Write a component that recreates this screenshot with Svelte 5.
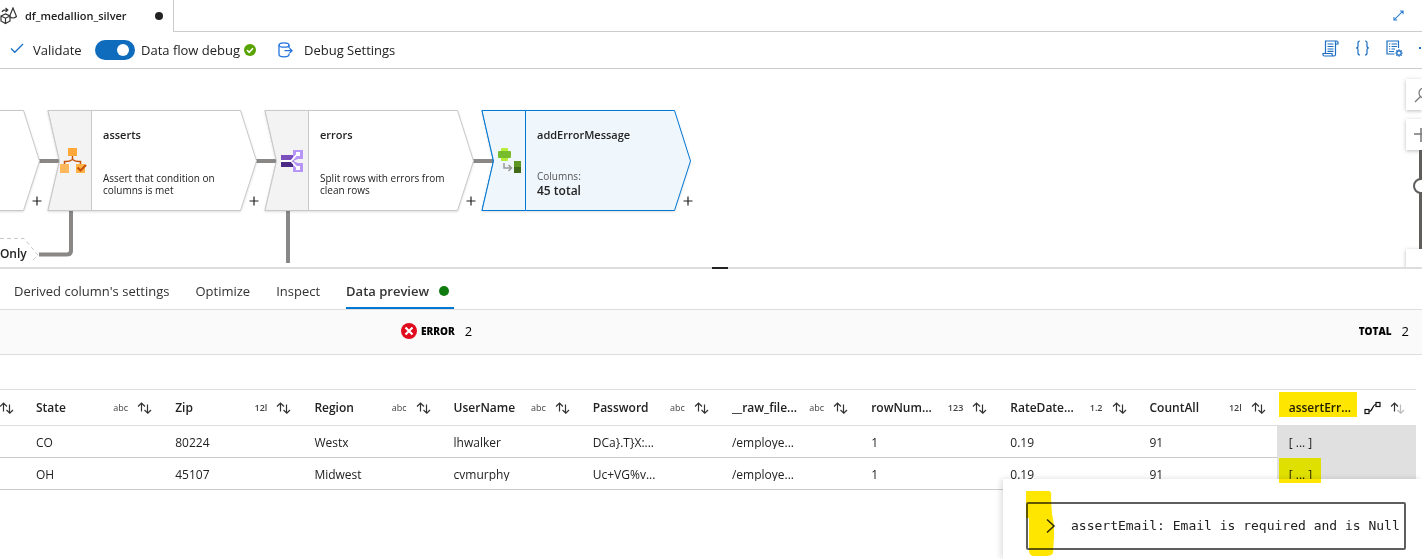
<script>
  const nodes = [
    { id: 'source', x: -169, title: '', text: '' },
    { id: 'asserts', x: 48, title: 'asserts', text: 'Assert that condition on columns is met' },
    { id: 'errors', x: 265, title: 'errors', text: 'Split rows with errors from clean rows' },
    { id: 'addErrorMessage', x: 482, title: 'addErrorMessage', total: '45 total', selected: true }
  ];

  const tabs = ["Derived column's settings", 'Optimize', 'Inspect', 'Data preview'];
  const active = 'Data preview';

  const columns = [
    { name: 'State', type: 'abc' },
    { name: 'Zip', type: '12l' },
    { name: 'Region', type: 'abc' },
    { name: 'UserName', type: 'abc' },
    { name: 'Password', type: 'abc' },
    { name: '__raw_file...', type: 'abc' },
    { name: 'rowNum...', type: '123' },
    { name: 'RateDate...', type: '1.2' },
    { name: 'CountAll', type: '12l' },
    { name: 'assertErr...', type: 'complex' }
  ];

  const rows = [
    ['CO', '80224', 'Westx', 'lhwalker', 'DCa}.T}X:...', '/employe...', '1', '0.19', '91', '[ ... ]'],
    ['OH', '45107', 'Midwest', 'cvmurphy', 'Uc+VG%v...', '/employe...', '1', '0.19', '91', '[ ... ]']
  ];
</script>

{#snippet sortIcon(half)}
  <svg width="15" height="12" viewBox="0 0 15 12" fill="none" stroke="#333" stroke-width="1.2">
    <path d="M4.5 9.5V1M1 4.5L4.5 1L8 4.5" />
    <path d="M10.5 2.500V11.2M7.5 8L10.8 11.2L14 8" stroke={half ? '#bbb' : '#333'} />
  </svg>
{/snippet}

<div class="page">
  <header class="filebar">
    <div class="filetab">
      <svg class="flowicon" width="17" height="18" viewBox="0 0 17 18" fill="none" stroke="#333" stroke-width="1.2">
        <path d="M1 9L5.5 7L10 9V14L5.5 16.5L1 14ZM1 9L5.5 11.2L10 9M5.5 11.2V16.500M13 1L9.500 9.500Q13 12.500 16.500 9.500ZM2 5Q3 2.500 7.500 3M5.500 1L7.800 3L5.500 5" />
      </svg>
      <span>df_medallion_silver</span>
      <i class="dirty"></i>
    </div>
    <div class="filerest">
      <button class="plain" aria-label="Expand">
        <svg width="11" height="11" viewBox="0 0 12 12" fill="none" stroke="#2b7cd3" stroke-width="1.1">
          <path d="M1 11L11 1M7.500 1H11V4.500M1 7.500V11H4.500" />
        </svg>
      </button>
      <span class="edge"></span>
    </div>
  </header>

  <div class="toolbar">
    <button class="plain validate">
      <svg width="14" height="11" viewBox="0 0 14 11" fill="none" stroke="#1b6ec2" stroke-width="1.3"><path d="M1 5.500L4.800 9.300L13 1" /></svg>
      Validate
    </button>
    <label class="debug">
      <input type="checkbox" role="switch" checked />
      Data flow debug
      <svg width="12" height="12" viewBox="0 0 12 12"><circle cx="6" cy="6" r="6" fill="#57a300" /><path d="M3 6.200L5.200 8.300L9 4.300" fill="none" stroke="#fff" stroke-width="1.6" /></svg>
    </label>
    <button class="plain settings">
      <svg width="15" height="16" viewBox="0 0 15 16" fill="none" stroke="#2374dd" stroke-width="1.3">
        <ellipse cx="6" cy="3" rx="5" ry="2.200" />
        <path d="M1 3V12.500Q1 14.800 6 14.800Q11 14.800 11 12.500V11.500M11 3V6M6.500 8.700H14M11.500 6.300L14 8.700L11.500 11" />
      </svg>
      Debug Settings
    </button>
    <div class="tools">
      <button class="plain" aria-label="Script">
        <svg width="17" height="17" viewBox="0 0 17 17" fill="none" stroke="#1b6ec2" stroke-width="1.200">
          <path d="M3.500 13V1H14.500Q16 1 16 2.500V4H13.500M14.500 1Q13.500 1 13.500 3V14.500Q13.500 16 12 16H2.500Q1 16 1 14.500V13.500H10V14.500Q10 16 12 16M5.500 4H11.500M5.500 6.500H11.500M5.500 9H11.500M5.500 11.300H11.500" />
        </svg>
      </button>
      <button class="plain" aria-label="Code">
        <svg width="15" height="16" viewBox="0 0 15 16" fill="none" stroke="#1b6ec2" stroke-width="1.200">
          <path d="M5 1Q3 1 3 3V6Q3 8 1 8Q3 8 3 10V13Q3 15 5 15M10 1Q12 1 12 3V6Q12 8 14 8Q12 8 12 10V13Q12 15 10 15" />
        </svg>
      </button>
      <button class="plain" aria-label="Properties">
        <svg width="17" height="17" viewBox="0 0 17 17" fill="none" stroke="#1b6ec2" stroke-width="1.200">
          <path d="M8.500 14H1V1H12.500V8M3 4H4.200M3 6.500H4.200M3 9H4.200M5.500 4H11M5.500 6.500H11M5.500 9H9M3 11.500H8" />
          <circle cx="13" cy="13" r="2.200" />
          <path d="M13 9.300V10.800M13 15.200V16.700M9.300 13H10.800M15.200 13H16.700M10.400 10.400L11.500 11.500M14.500 14.500L15.600 15.600M15.600 10.400L14.500 11.500M11.500 14.500L10.400 15.600" />
        </svg>
      </button>
      <i class="more"></i>
    </div>
  </div>

  <main class="canvas">
    <svg class="links" width="700" height="194" fill="none" stroke="#8a8886" stroke-width="4">
      <path d="M39 92H60M256 92H277M473 92H494" />
      <path d="M39 185.500H67Q71 185.500 71 181.500V142M288 142V194" />
      <path d="M0 169.500H24L38 186L31 193" stroke="#c8c8c8" stroke-width="1" stroke-dasharray="4 3" />
    </svg>
    <span class="stub">eOnly</span>

    {#each nodes as node (node.id)}
      <article class="node" class:selected={node.selected} style="left: {node.x}px">
        <svg class="shape" width="210" height="102" viewBox="0 0 210 102">
          <path class="body" d="M0 .5H192.500L208.500 51L192.500 100.500H0L11.500 51Z" />
          <path class="side" d="M0 .5H43.500V100.500H0L11.500 51Z" />
        </svg>
        <div class="glyph">
          {#if node.id === 'asserts'}
            <svg width="28" height="26" viewBox="0 0 28 26">
              <rect x="9" y="0" width="9" height="8" fill="#ffa93a" /><rect x="1" y="16" width="9" height="9" fill="#ffb75e" /><rect x="17" y="16" width="9" height="9" fill="#ffb347" />
              <path d="M13.500 8V12M5.500 16V13.500Q10 14 13.500 11.500Q17 14 21.500 13.500V16" fill="none" stroke="#c5540a" stroke-width="1.500" />
              <path d="M18.500 19.500L21.500 22.500L27 17" fill="none" stroke="#c5540a" stroke-width="2.200" />
            </svg>
          {:else if node.id === 'errors'}
            <svg width="24" height="22" viewBox="0 0 24 22">
              <rect x="1" y="5" width="13" height="6" fill="#7a50bd" /><rect x="1" y="11" width="13" height="6" fill="#4b2a86" />
              <path d="M13 0H23V9H18L13 11ZM13 22H23V13H18L13 11Z" fill="#b796f9" />
              <path d="M1 11H11L17 4.500M11 11L17 17.500" fill="none" stroke="#fff" stroke-width="1.800" />
              <rect x="16" y="2" width="4" height="4" fill="#fff" /><rect x="16" y="16" width="4" height="4" fill="#fff" />
            </svg>
          {:else if node.selected}
            <svg width="24" height="26" viewBox="0 0 24 26">
              <rect x="4" y="0" width="7" height="13" rx="1" fill="#b4ec36" /><rect x="1" y="3" width="13" height="7" rx="1" fill="#76bc2d" />
              <path d="M7 15V20H14M11.500 17L14.500 20L11.500 23" fill="none" stroke="#999" stroke-width="1.500" />
              <rect x="17" y="13" width="7" height="6" fill="#5e9624" /><rect x="17" y="19" width="7" height="6" fill="#426b19" />
            </svg>
          {/if}
        </div>
        <div class="info">
          <h3>{node.title}</h3>
          {#if node.total}
            <p class="count">Columns:<b>{node.total}</b></p>
          {:else}
            <p>{node.text}</p>
          {/if}
        </div>
        <button class="plain add" aria-label="Add step">
          <svg width="10" height="10" viewBox="0 0 10 10" stroke="#222" stroke-width="1.200"><path d="M5 .5V9.500M.5 5H9.500" /></svg>
        </button>
      </article>
    {/each}

    <div class="zoom">
      <button class="tool" aria-label="Search">
        <svg width="16" height="16" viewBox="0 0 16 16" fill="none" stroke="#767676" stroke-width="1.200"><circle cx="10" cy="6" r="5" /><path d="M6.500 9.500L1 15" /></svg>
      </button>
      <button class="tool" aria-label="Zoom in">
        <svg width="16" height="16" viewBox="0 0 16 16" stroke="#767676" stroke-width="1.500"><path d="M7 1V15M0 7H14" /></svg>
      </button>
      <div class="track"><i></i></div>
      <button class="tool" aria-label="Zoom out"></button>
    </div>
  </main>

  <div class="splitter"><i></i></div>

  <nav class="tabs">
    {#each tabs as tab}
      <button class="plain tab" class:active={tab === active}>
        {tab}
        {#if tab === active}<i></i>{/if}
      </button>
    {/each}
  </nav>

  <div class="summary">
    <div class="stat error">
      <svg width="16" height="16" viewBox="0 0 16 16"><circle cx="8" cy="8" r="8" fill="#e00b1c" /><path d="M4.500 4.500L11.500 11.500M11.500 4.500L4.500 11.500" stroke="#fff" stroke-width="2.200" /></svg>
      <b>ERROR</b><span>2</span>
    </div>
    <div class="stat"><b>TOTAL</b><span>2</span></div>
  </div>

  <section class="preview">
    <table>
      <thead>
        <tr>
          <th class="first"><div class="head">{@render sortIcon(false)}</div></th>
          {#each columns as col}
            <th>
              <div class="head">
                <span class="name">{col.name}</span>
                {#if col.type === 'complex'}
                  <i class="mark head-mark"></i>
                  <svg width="17" height="14" viewBox="0 0 17 14" fill="none" stroke="#111" stroke-width="1.200">
                    <rect x="1" y="8.500" width="4" height="4" /><rect x="12" y="1.500" width="4" height="4" /><path d="M5 10.500C9 10.500 8 3.500 12 3.500" />
                  </svg>
                {:else}
                  <span class="type" class:num={col.type !== 'abc'}>{col.type}</span>
                {/if}
                {@render sortIcon(col.type === 'complex')}
              </div>
            </th>
          {/each}
        </tr>
      </thead>
      <tbody>
        {#each rows as row, r}
          <tr>
            <td></td>
            {#each row as value, c}
              <td class:picked={c === 9}>
                <div class="value">{value}</div>
                {#if c === 9 && r === 1}<i class="mark cell-mark"></i>{/if}
              </td>
            {/each}
          </tr>
        {/each}
      </tbody>
    </table>

    <aside class="popup">
      <div class="entry">
        <button class="plain" aria-label="Expand item">
          <svg width="10" height="16" viewBox="0 0 10 16" fill="none" stroke="#333" stroke-width="1.600"><path d="M1 1.500L8 8L1 14.500" /></svg>
        </button>
        <code>assertEmail: Email is required and is Null</code>
        <svg class="scribble" width="28" height="67" viewBox="0 0 28 67"><path d="M0 1H23Q26 1 25 8L26 24Q29 36 28 47L27 63Q26 66 20 66H8Q3 66 3 60V28H0Z" fill="#ffe600" /></svg>
      </div>
    </aside>
  </section>
</div>

<style>
  :global(body) { margin: 0; background: #fff; }
  .page {
    display: flex; flex-direction: column; height: 100vh; overflow: hidden;
    font: 13px/18px "Open Sans", "Noto Sans", sans-serif; color: #222;
  }
  .page, .page * { box-sizing: border-box; }
  svg { display: block; flex: none; }
  .plain { border: 0; padding: 0; background: none; font: inherit; color: inherit; }

  .filebar { display: flex; flex: 0 0 32px; }
  .filetab {
    display: flex; align-items: center; width: 174px; padding-right: 10px;
    border-right: 1px solid #ccc; font-size: 11px; font-weight: 600;
  }
  .filetab span { margin-left: 8px; flex: 1; white-space: nowrap; }
  .dirty { width: 8px; height: 8px; border-radius: 50%; background: #222; }
  .filerest {
    display: flex; flex: 1; align-items: center; justify-content: flex-end; gap: 18px;
    border-bottom: 1px solid #ccc;
  }
  .edge { width: 0; }

  .toolbar {
    display: flex; align-items: center; flex: 0 0 37px; padding-left: 10px;
    border-bottom: 1px solid #ccc;
  }
  .validate { display: flex; align-items: center; gap: 9px; width: 85px; }
  .validate svg { margin-bottom: 4px; }
  .debug { display: flex; align-items: center; gap: 6px; width: 183px; white-space: nowrap; }
  .debug svg { margin-left: -2px; }
  .debug input {
    appearance: none; flex: none; width: 40px; height: 20px; margin: 0;
    border-radius: 10px; background: #0f6cbd;
  }
  .debug input::before {
    content: ""; display: block; width: 12px; height: 12px; margin: 4px 0 0 22px;
    border-radius: 50%; background: #fff;
  }
  .settings { display: flex; align-items: center; gap: 11px; }
  .tools { display: flex; align-items: center; gap: 16px; margin-left: auto; padding: 0 1px 4px 0; }
  .more { width: 2px; height: 2px; background: #1b6ec2; }

  .canvas { position: relative; flex: 0 0 198px; overflow: hidden; }
  .links { position: absolute; left: 0; top: 0; }
  .stub { position: absolute; left: -7px; top: 176px; font-size: 12px; font-weight: 600; }
  .node { position: absolute; top: 41px; width: 210px; height: 102px; display: flex; }
  .shape { position: absolute; inset: 0; overflow: visible; filter: drop-shadow(0 1px 1px #0002); }
  .body { fill: #fff; stroke: #c8c8c8; }
  .side { fill: #f3f3f3; stroke: #c8c8c8; }
  .selected .body, .selected .side { fill: #eff6fc; stroke: #0078d4; }
  .glyph { position: relative; display: flex; align-items: center; justify-content: flex-end; width: 44px; padding-right: 5px; }
  .info { position: relative; width: 138px; padding: 16px 0 0 11px; }
  h3 { margin: 0; font-size: 11px; line-height: 18px; font-weight: 600; }
  p { margin: 28px 0 0; font-size: 10px; line-height: 12px; }
  .count { margin-top: 26px; color: #555; }
  .count b { display: block; font-size: 12px; line-height: 18px; font-weight: 600; color: #222; }
  .add { position: absolute; left: 201px; top: 86px; }

  .zoom { position: absolute; right: 0; top: 10px; width: 16px; display: flex; flex-direction: column; }
  .tool {
    display: flex; align-items: center; flex: none; height: 31px; margin-bottom: 9px;
    border: 0; padding: 0 0 0 8px; background: #fff; box-shadow: 0 1px 4px #0004; overflow: hidden;
  }
  .tool + .tool { margin-bottom: 0; }
  .track { position: relative; width: 4px; height: 99px; margin-left: 13px; background: #605e5c; }
  .track i {
    position: absolute; left: -6px; top: 28px; width: 16px; height: 16px;
    border: 2px solid #605e5c; border-radius: 50%; background: #fff;
  }

  .splitter { flex: 0 0 2px; display: flex; justify-content: center; background: #ddd; }
  .splitter i { width: 16px; background: #222; margin-left: 18px; }

  .tabs { display: flex; flex: 0 0 40px; gap: 26px; padding-left: 14px; border-bottom: 1px solid #ddd; }
  .tab { display: flex; align-items: center; gap: 10px; height: 40px; padding: 6px 0 0; border-bottom: 2px solid transparent; white-space: nowrap; color: #333; }
  .tab.active { border-bottom-color: #0078d4; padding-right: 5px; font-weight: 600; }
  .tab i { width: 10px; height: 10px; border-radius: 50%; background: #107c10; }

  .summary {
    display: flex; align-items: center; justify-content: space-between; flex: 0 0 45px;
    padding: 0 13px 3px 401px; background: #fafafa; border-bottom: 1px solid #ddd; color: #000;
  }
  .stat { display: flex; align-items: center; gap: 10px; }
  .stat svg { margin-right: -6px; }
  .stat b { font-size: 10px; font-weight: 800; }

  .preview { position: relative; flex: 1; padding-top: 34px; }
  table { width: calc(100% - 6px); table-layout: fixed; border-collapse: separate; border-spacing: 0; border-top: 1px solid #ddd; }
  th, td { position: relative; padding: 0 11px 0 12px; text-align: left; font-weight: 400; }
  th { height: 36px; border-bottom: 1px solid #ddd; font-size: 12px; }
  .first { width: 24px; padding: 0; }
  .head { display: flex; align-items: center; gap: 9px; white-space: nowrap; }
  .first .head { margin-left: -1px; }
  .name { flex: 1; font-weight: 600; }
  .type { font-size: 9px; color: #444; }
  .num { font-weight: 600; }
  td { height: 32px; padding-top: 2px; border-bottom: 1px solid #ccc; font-size: 12px; }
  .value { height: 12px; line-height: 12px; overflow: hidden; white-space: nowrap; }
  .picked { background: #e0e0e0; border-bottom-color: #e0e0e0; }
  .mark { position: absolute; z-index: 3; left: 2px; background: #ffe600; mix-blend-mode: multiply; }
  .head-mark { top: 2px; width: 78px; height: 25px; }
  .cell-mark { top: 0; width: 42px; height: 25px; background: linear-gradient(#ff0 21px, #ffe600 21px); }

  .popup {
    position: absolute; z-index: 2; top: 124px; right: 0; bottom: 0; width: 419px;
    padding: 23px 16px 9px 23px; background: #fff; box-shadow: -2px 0 6px #0002;
  }
  .entry {
    position: relative; display: flex; align-items: center; gap: 15px; height: 48px;
    padding-left: 18px; border: 2px solid #605e5c; border-radius: 2px;
  }
  code { font: 13px/18px "DejaVu Sans Mono", monospace; white-space: nowrap; }
  .scribble { position: absolute; left: -2px; top: -14px; mix-blend-mode: multiply; }
</style>
